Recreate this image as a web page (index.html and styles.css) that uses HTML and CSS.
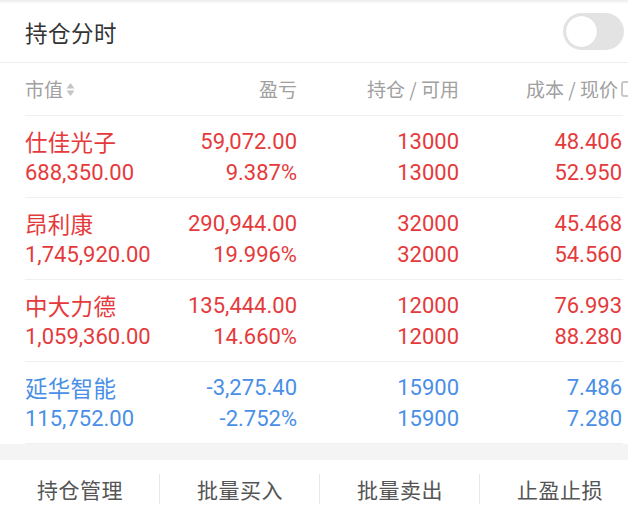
FILE: index.html
```html
<!DOCTYPE html>
<html lang="zh-CN">
<head>
<meta charset="utf-8">
<title>持仓分时</title>
<link rel="stylesheet" href="styles.css">
</head>
<body>
<div class="page">
  <div class="topstrip"></div>
  <div class="titlebar">
    <span class="title">持仓分时</span>
    <span class="toggle"><span class="knob"></span></span>
  </div>
  <div class="thead">
    <div class="th th-left">市值<svg class="sort" width="9" height="17" viewBox="0 0 9 17"><path d="M0.5 7.5 L4.5 2 L8.5 7.5 Z" fill="#c4c4c4"/><path d="M0.5 9.5 L4.5 15 L8.5 9.5 Z" fill="#c4c4c4"/></svg></div>
    <div class="th">盈亏</div>
    <div class="th">持仓 / 可用</div>
    <div class="th th-last"><span>成本 / 现价</span><span class="hicon"></span></div>
  </div>
  <div class="rows">
    <div class="row up">
      <div class="c c-left"><div class="name">仕佳光子</div><div>688,350.00</div></div>
      <div class="c"><div>59,072.00</div><div>9.387%</div></div>
      <div class="c"><div>13000</div><div>13000</div></div>
      <div class="c"><div>48.406</div><div>52.950</div></div>
    </div>
    <div class="row up">
      <div class="c c-left"><div class="name">昂利康</div><div>1,745,920.00</div></div>
      <div class="c"><div>290,944.00</div><div>19.996%</div></div>
      <div class="c"><div>32000</div><div>32000</div></div>
      <div class="c"><div>45.468</div><div>54.560</div></div>
    </div>
    <div class="row up">
      <div class="c c-left"><div class="name">中大力德</div><div>1,059,360.00</div></div>
      <div class="c"><div>135,444.00</div><div>14.660%</div></div>
      <div class="c"><div>12000</div><div>12000</div></div>
      <div class="c"><div>76.993</div><div>88.280</div></div>
    </div>
    <div class="row down">
      <div class="c c-left"><div class="name">延华智能</div><div>115,752.00</div></div>
      <div class="c"><div>-3,275.40</div><div>-2.752%</div></div>
      <div class="c"><div>15900</div><div>15900</div></div>
      <div class="c"><div>7.486</div><div>7.280</div></div>
    </div>
  </div>
  <div class="band"></div>
  <div class="actions">
    <div class="act">持仓管理</div>
    <div class="act sep">批量买入</div>
    <div class="act sep">批量卖出</div>
    <div class="act sep">止盈止损</div>
  </div>
</div>
</body>
</html>
```
FILE: styles.css
```css
html, body {
  margin: 0;
  padding: 0;
  background: #ffffff;
}
body {
  width: 628px;
  overflow: hidden;
  font-family: Roboto, "Noto Sans CJK SC", sans-serif;
}
.page {
  width: 640px;
}
.topstrip {
  height: 3px;
  background: linear-gradient(#ececec, #fafafa);
  width: 628px;
}
.titlebar {
  width: 628px;
  box-sizing: border-box;
  height: 60px;
  padding: 0 4px 2px 25px;
  display: flex;
  align-items: center;
  justify-content: space-between;
  border-bottom: 1px solid #eeeeee;
}
.title {
  font-family: "Noto Sans CJK SC", sans-serif;
  font-size: 22.5px;
  color: #333333;
  letter-spacing: 0.5px;
}
.toggle {
  width: 61px;
  height: 37px;
  border-radius: 19px;
  background: #e3e3e3;
  display: flex;
  align-items: center;
  padding-left: 3px;
  box-sizing: border-box;
}
.knob {
  width: 31px;
  height: 31px;
  border-radius: 50%;
  background: #ffffff;
  box-shadow: 0 0 1px rgba(0,0,0,0.15);
}
.thead, .row {
  width: 598px;
  margin-left: 25px;
  display: grid;
  grid-template-columns: 130px 142px 162px 163px;
  border-bottom: 1px solid #f0f0f0;
}
.thead {
  height: 52px;
  align-items: center;
}
.th {
  font-family: "Noto Sans CJK SC", sans-serif;
  font-size: 19px;
  color: #a0a0a0;
  text-align: right;
  line-height: 24px;
  white-space: pre;
}
.th-left {
  text-align: left;
  display: flex;
  align-items: center;
}
.sort {
  margin-left: 3px;
}
.th-last {
  display: flex;
  justify-content: flex-end;
  align-items: center;
  margin-right: -15px;
}
.hicon {
  width: 16px;
  height: 16px;
  margin-left: 3px;
  border-radius: 3px;
  border: 2px solid #c8c8c8;
  box-sizing: border-box;
}
.row {
  padding: 10px 0 9px;
  font-size: 22px;
  line-height: 31px;
}
.c {
  text-align: right;
  white-space: nowrap;
}
.c-left {
  text-align: left;
}
.name {
  font-family: "Noto Sans CJK SC", sans-serif;
  font-size: 22.5px;
  letter-spacing: 0.3px;
}
.up { color: #e53a3c; }
.down { color: #4a8fe6; }
.band {
  width: 628px;
  height: 16px;
  background: #f4f4f4;
}
.actions {
  width: 640px;
  height: 58px;
  display: grid;
  grid-template-columns: repeat(4, 160px);
  align-items: center;
}
.act {
  font-family: "Noto Sans CJK SC", sans-serif;
  font-size: 21px;
  color: #555555;
  text-align: center;
  height: 30px;
  line-height: 30px;
  letter-spacing: 0.5px;
}
.sep {
  border-left: 1px solid #e8e8e8;
  margin-left: -1px;
}
```
